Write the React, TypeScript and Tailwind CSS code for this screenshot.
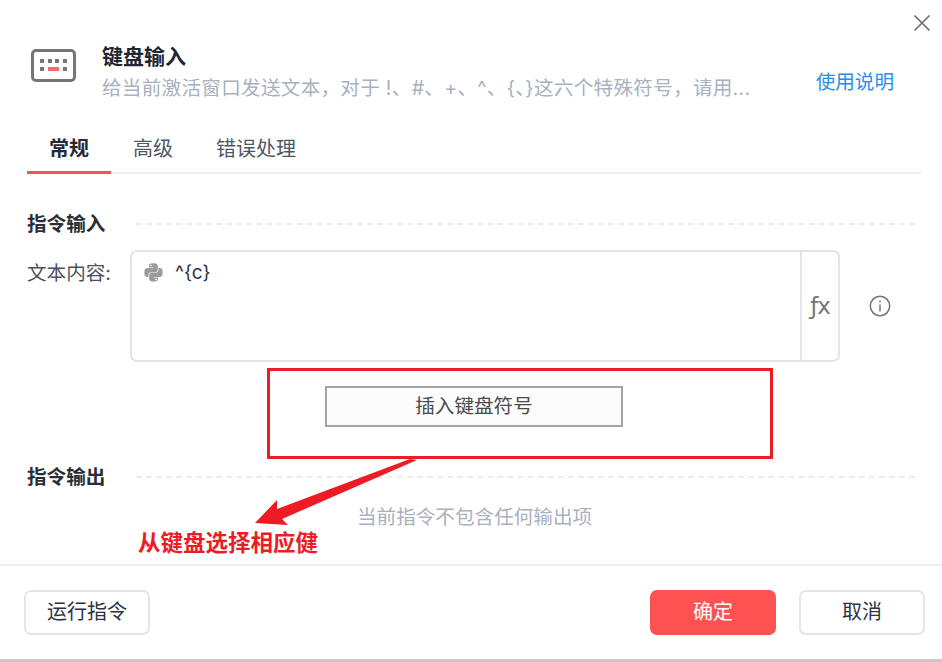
import React from "react";
import { FaPython } from "react-icons/fa";

const FONT = "font-['Inter','Noto_Sans_CJK_SC',sans-serif]";

function SectionTitle({ children }: { children: React.ReactNode }) {
  return (
    <div className="flex items-center">
      <span className="text-[19.6px] leading-[26px] font-bold text-[#2a2e37] w-[109px] shrink-0">{children}</span>
      <div className="flex-1 border-t-2 border-dashed border-[#ececf0]" />
    </div>
  );
}

export default function App() {
  return (
    <div className={`relative w-[942px] h-[662px] bg-white flex flex-col overflow-hidden border-b-[3px] border-[#c9c9c9] ${FONT}`}>
      <button className="absolute right-[11px] top-[14px] text-[#6f6f73]">
        <svg width="18" height="18" viewBox="0 0 18 18" fill="none" stroke="currentColor" strokeWidth="1.7">
          <path d="M1.5 1.5 16.5 16.5M16.5 1.5 1.5 16.5" />
        </svg>
      </button>

      <header className="flex items-start pt-[43px] pl-[31px] pr-[48px] h-[128px]">
        <svg width="46" height="34" viewBox="0 0 46 34" className="mt-[6px] shrink-0">
          <rect x="1.5" y="1.5" width="42" height="30" rx="3.5" fill="none" stroke="#75757d" strokeWidth="3" />
          <g fill="#75757d">
            <rect x="9" y="10" width="4" height="4" />
            <rect x="17" y="10" width="4" height="4" />
            <rect x="24" y="10" width="4" height="4" />
            <rect x="32" y="10" width="4" height="4" />
            <rect x="9" y="18" width="4" height="4" />
            <rect x="32" y="18" width="4" height="4" />
          </g>
          <rect x="17" y="18" width="11" height="4" fill="#f56c6c" />
        </svg>
        <div className="ml-[25px] flex-1 min-w-0">
          <div className="text-[21px] leading-[28px] font-bold text-[#22262e]">键盘输入</div>
          <div className="mt-[3px] text-[19.6px] tracking-[0.27px] leading-[28px] text-[#a9b0c0] whitespace-nowrap">
            给当前激活窗口发送文本，对于 !、#、+、^、{"{"}、{"}"}这六个特殊符号，请用...
          </div>
        </div>
        <a className="mt-[26px] text-[19.6px] leading-[26px] text-[#2a8cf0] shrink-0">使用说明</a>
      </header>

      <nav className="mx-[27px] w-[894px] flex border-b-2 border-[#eeeef3] h-[46px] text-[20px] leading-[42px]">
        <div className="w-[84px] h-[46px] text-center font-bold text-[#272b33] border-b-[3px] border-[#fd5252]">常规</div>
        <div className="ml-[22px] text-[#4f5666]">高级</div>
        <div className="ml-[43px] text-[#4f5666]">错误处理</div>
      </nav>

      <main className="flex-1 px-[27px] pt-[37px]">
        <SectionTitle>指令输入</SectionTitle>
        <div className="flex mt-[13px]">
          <label className="w-[103px] shrink-0 pt-[10px] text-[19.6px] leading-[26px] text-[#4b5160]">文本内容:</label>
          <div className="w-[710px] h-[112px] flex border-2 border-[#e4e4ea] rounded-[7px]">
            <div className="flex-1 flex items-start pt-[9px] pl-[11px]">
              <FaPython className="text-[#9b9b9b] mt-[1px]" size={21} />
              <span className="ml-[11px] text-[19px] leading-[24px] text-[#2c3240]">^{"{c}"}</span>
            </div>
            <div className="w-[38px] border-l-2 border-[#e4e4ea] flex items-center justify-center">
              <span className="text-[23px] leading-[30px] tracking-[-1px] text-[#75757d] font-['DejaVu_Sans',sans-serif]">ƒx</span>
            </div>
          </div>
          <div className="ml-[29px] mt-[45px]">
            <svg width="22" height="22" viewBox="0 0 22 22" fill="none" stroke="#6e7480" strokeWidth="1.5">
              <circle cx="11" cy="11" r="9.7" />
              <path d="M11 9.5v7" />
              <path d="M11 5.5v1.8" />
            </svg>
          </div>
        </div>

        <div className="ml-[298px] mt-[24px] w-[298px] h-[41px] border-2 border-[#a3a3a3] bg-[#fcfcfc] flex items-center justify-center text-[19.6px] text-[#4a4a4a]">
          插入键盘符号
        </div>

        <div className="mt-[37px]">
          <SectionTitle>指令输出</SectionTitle>
        </div>
        <div className="mt-[13px] ml-[330px] text-[19.6px] leading-[28px] text-[#a9b0c0]">当前指令不包含任何输出项</div>
      </main>

      <footer className="h-[95px] border-t-2 border-[#eeeef3] flex items-center px-[24px] pb-[1px]">
        <button className="w-[126px] h-[45px] border-2 border-[#e4e4ea] rounded-[7px] text-[20px] text-[#2c3240]">运行指令</button>
        <button className="ml-auto w-[126px] h-[45px] rounded-[7px] bg-[#fd5252] text-[20px] text-white">确定</button>
        <button className="ml-[23px] mr-[-7px] w-[126px] h-[45px] border-2 border-[#e4e4ea] rounded-[7px] text-[20px] text-[#2c3240]">取消</button>
      </footer>

      {/* annotation overlay */}
      <div className="absolute left-[267px] top-[368px] w-[506px] h-[91px] border-[3px] border-[#ed1c24]" />
      <svg className="absolute left-0 top-0 pointer-events-none" width="942" height="662">
        <polygon points="417,460 282,519 288,525 255,523 277,500 277,509 410,459" fill="#ed1c24" />
      </svg>
      <div className="absolute left-[138px] top-[526px] text-[22.5px] leading-[30px] font-bold text-[#ed1c24] whitespace-nowrap font-['Noto_Sans_CJK_SC',sans-serif]">
        从键盘选择相应健
      </div>
    </div>
  );
}
